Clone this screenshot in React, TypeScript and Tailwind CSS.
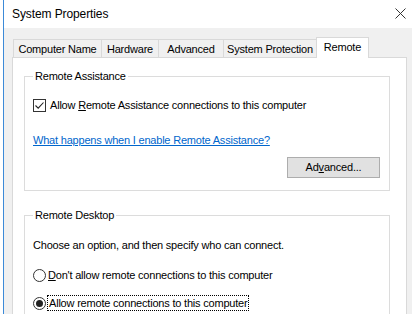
import React from "react";

function Tab({ label, w, selected }: { label: string; w: string; selected?: boolean }) {
  if (selected) {
    return (
      <div
        className={`relative z-10 -ml-px -mb-px h-[21px] ${w} border border-b-0 border-[#d9d9d9] bg-white flex justify-center pt-[2px] leading-[14px]`}
      >
        {label}
      </div>
    );
  }
  return (
    <div
      className={`-ml-px first:ml-0 h-[18px] ${w} border border-b-0 border-[#d9d9d9] bg-[#f0f0f0] flex items-center justify-center leading-[14px]`}
    >
      {label}
    </div>
  );
}

function CheckBox() {
  return (
    <div className="w-[13px] h-[13px] border border-[#333] bg-white flex items-center justify-center shrink-0">
      <svg width="11" height="11" viewBox="0 0 11 11">
        <path d="M1.5 5.5 L4.2 8.2 L9.5 2.5" fill="none" stroke="#222" strokeWidth="1.1" />
      </svg>
    </div>
  );
}

function Radio({ on }: { on?: boolean }) {
  return (
    <div className="w-[13px] h-[13px] rounded-full border border-[#333] bg-white flex items-center justify-center shrink-0">
      {on && <div className="w-[7px] h-[7px] rounded-full bg-[#222]" />}
    </div>
  );
}

export default function App() {
  return (
    <div
      className="w-[412px] h-[314px] overflow-hidden bg-white flex text-black text-[11px] tracking-[-0.2px]"
      style={{ fontFamily: '"Liberation Sans", Arial, sans-serif' }}
    >
      <div className="w-[3px] bg-white shrink-0" />
      <div className="w-px bg-[#3c8ad8] shrink-0" />
      <div className="flex-1 flex flex-col bg-[#f0f0f0]">
        {/* title bar */}
        <div className="h-[28px] bg-white flex items-center justify-between pl-[8px] pr-[6px] shrink-0">
          <span className="text-[12px] tracking-[-0.1px] pb-[1px]">System Properties</span>
          <svg width="11" height="11" viewBox="0 0 11 11" className="mb-[1px]">
            <path d="M0.5 0.5 L10.5 10.5 M10.5 0.5 L0.5 10.5" stroke="#333" strokeWidth="1" />
          </svg>
        </div>
        {/* tabs */}
        <div className="mt-[9px] ml-[8px] w-[395px] flex flex-col">
          <div className="flex items-end h-[20px] pl-[1px]">
            <Tab label="Computer Name" w="w-[89px]" />
            <Tab label="Hardware" w="w-[58px]" />
            <Tab label="Advanced" w="w-[66px]" />
            <Tab label="System Protection" w="w-[94px]" />
            <Tab label="Remote" w="w-[53px]" selected />
          </div>
          <div className="h-[260px] border border-[#d9d9d9] bg-white pl-[11px] pt-[11px]">
            <fieldset className="w-[366px] border border-[#dcdcdc] pl-[8px] pb-[12px]">
              <legend className="px-[2px] leading-[14px]">Remote Assistance</legend>
              <div className="mt-[14px] flex items-center gap-[4px] h-[16px]">
                <CheckBox />
                <span>
                  Allow <span className="underline">R</span>emote Assistance connections to this computer
                </span>
              </div>
              <div className="mt-[19px] h-[16px] flex items-center">
                <span className="text-[#0066cc] underline">What happens when I enable Remote Assistance?</span>
              </div>
              <div className="mt-[9px] flex justify-end pr-[9px]">
                <div className="w-[93px] h-[21px] bg-[#e1e1e1] border border-[#adadad] flex items-center justify-center">
                  <span>
                    Ad<span className="underline">v</span>anced...
                  </span>
                </div>
              </div>
            </fieldset>
            <fieldset className="mt-[17px] w-[366px] h-[120px] border border-[#dcdcdc] pl-[8px]">
              <legend className="px-[2px] leading-[14px]">Remote Desktop</legend>
              <div className="mt-[15px] h-[16px] flex items-center">
                Choose an option, and then specify who can connect.
              </div>
              <div className="mt-[14px] h-[16px] flex items-center gap-[2px]">
                <Radio />
                <span>
                  <span className="underline">D</span>on't allow remote connections to this computer
                </span>
              </div>
              <div className="mt-[12px] h-[16px] flex items-center gap-[1px]">
                <Radio on />
                <span className="border border-dotted border-black px-[1px] leading-[14px]">
                  Allow remote connections to this computer
                </span>
              </div>
            </fieldset>
          </div>
        </div>
      </div>
    </div>
  );
}
